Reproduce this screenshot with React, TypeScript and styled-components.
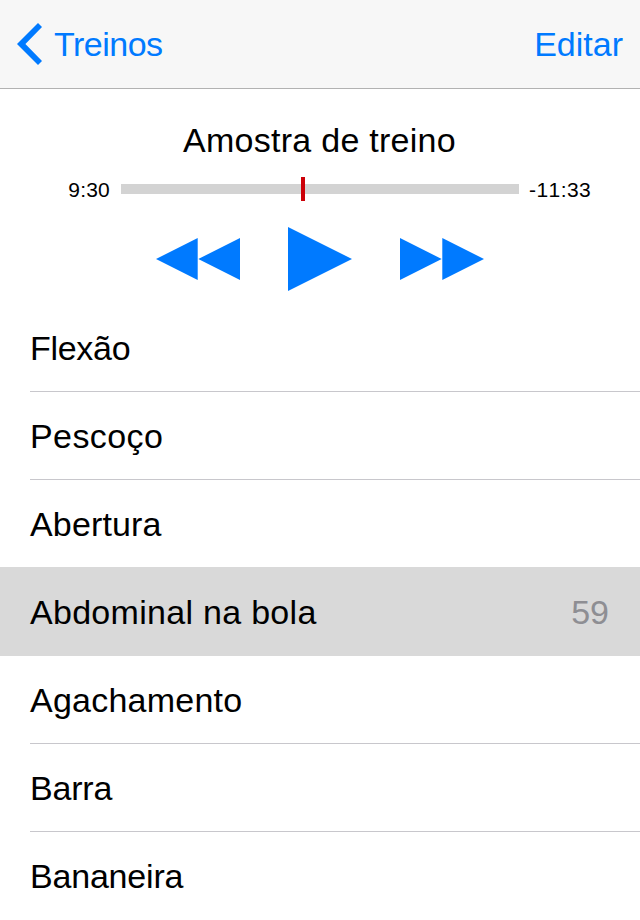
import React from 'react';
import styled, { createGlobalStyle } from 'styled-components';

const Global = createGlobalStyle`
  * { box-sizing: border-box; }
  body { margin: 0; background: #fff; }
`;

const Screen = styled.main`
  width: 640px;
  height: 920px;
  overflow: hidden;
  background: #fff;
  color: #000;
  font-family: "Liberation Sans", Arial, sans-serif;
  font-size: 34px;
  line-height: 40px;
`;

const NavBar = styled.header`
  display: flex;
  justify-content: space-between;
  height: 89px;
  padding: 24px 17px 0 17px;
  background: #f7f7f7;
  border-bottom: 1px solid #b2b2b2;
`;

const NavButton = styled.button`
  display: flex;
  gap: 12px;
  height: 40px;
  padding: 0;
  border: 0;
  background: none;
  color: #007aff;
  font: inherit;
`;

const BackIcon = styled.svg`
  margin-top: -1px;
`;

const Label = styled.span<{ $tracking?: number }>`
  display: block;
  white-space: nowrap;
  letter-spacing: ${({ $tracking = 0 }) => $tracking}px;
`;

const Player = styled.section`
  height: 215px;
  padding-top: 31px;
`;

const Title = styled.h1`
  height: 40px;
  margin: 0 1px 0 0;
  font-size: 34px;
  font-weight: 400;
  letter-spacing: 0.27px;
  text-align: center;
`;

const Timeline = styled.div`
  display: grid;
  grid-template-columns: 110px 398px 1fr;
  align-items: center;
  column-gap: 11px;
  height: 24px;
  margin-top: 17px;
`;

const Time = styled.span<{ $elapsed?: boolean }>`
  padding-top: 2px;
  margin-left: ${({ $elapsed }) => ($elapsed ? 0 : '-1px')};
  font-size: 21px;
  line-height: 22px;
  font-kerning: none;
  letter-spacing: ${({ $elapsed }) => ($elapsed ? 0.2 : 0.45)}px;
  text-align: ${({ $elapsed }) => ($elapsed ? 'right' : 'left')};
`;

const Track = styled.div`
  display: flex;
  height: 24px;
  padding-left: 180px;
  background: linear-gradient(#d3d3d3, #d3d3d3) center / 100% 10px no-repeat;
`;

const Playhead = styled.div`
  width: 4px;
  height: 24px;
  background: #cc0008;
`;

const Controls = styled.div`
  display: flex;
  justify-content: center;
  align-items: center;
  gap: 48px;
  height: 64px;
  margin-top: 26px;
`;

const ControlButton = styled.button`
  display: flex;
  padding: 0;
  border: 0;
  background: none;
  color: #007aff;
`;

const List = styled.ul`
  margin: 0;
  padding: 0;
  list-style: none;
`;

const Row = styled.li<{ $selected?: boolean }>`
  height: ${({ $selected }) => ($selected ? 89 : 88)}px;
  margin-top: ${({ $selected }) => ($selected ? '-1px' : 0)};
  padding: ${({ $selected }) => ($selected ? '1px 0 0 30px' : '0 0 0 30px')};
  background: ${({ $selected }) => ($selected ? '#d9d9d9' : 'transparent')};
`;

const RowContent = styled.div<{ $divided?: boolean }>`
  display: flex;
  justify-content: space-between;
  height: 88px;
  padding: 24px 31px 0 0;
  border-bottom: 1px solid ${({ $divided }) => ($divided ? '#c8c7cc' : 'transparent')};
`;

const Count = styled.span`
  color: #8e8e93;
`;

interface Exercise {
  name: string;
  tracking: number;
  divided?: boolean;
  selected?: boolean;
  count?: number;
}

const exercises: Exercise[] = [
  { name: 'Flexão', tracking: -0.3, divided: true },
  { name: 'Pescoço', tracking: 0.4, divided: true },
  { name: 'Abertura', tracking: 0.15 },
  { name: 'Abdominal na bola', tracking: 0.29, selected: true, count: 59 },
  { name: 'Agachamento', tracking: 0.23, divided: true },
  { name: 'Barra', tracking: -0.2, divided: true },
  { name: 'Bananeira', tracking: -0.2 },
];

export default function App() {
  return (
    <Screen>
      <Global />
      <NavBar>
        <NavButton>
          <BackIcon width="25" height="42" viewBox="0 0 25 42" fill="currentColor" aria-hidden="true">
            <path d="M21 0 25 4 8.4 21 25 38 21 42 0 21Z" />
          </BackIcon>
          <Label $tracking={-0.5}>Treinos</Label>
        </NavButton>
        <NavButton><Label>Editar</Label></NavButton>
      </NavBar>
      <Player>
        <Title>Amostra de treino</Title>
        <Timeline>
          <Time $elapsed>9:30</Time>
          <Track><Playhead /></Track>
          <Time>-11:33</Time>
        </Timeline>
        <Controls>
          <ControlButton aria-label="Retroceder">
            <svg width="84" height="42" viewBox="0 0 84 42" fill="currentColor"><path d="M41.7 0v42L0 21ZM84 0v42L42.3 21Z" /></svg>
          </ControlButton>
          <ControlButton aria-label="Reproduzir">
            <svg width="64" height="64" viewBox="0 0 64 64" fill="currentColor"><path d="M0 0 64 32 0 64Z" /></svg>
          </ControlButton>
          <ControlButton aria-label="Avançar">
            <svg width="84" height="42" viewBox="0 0 84 42" fill="currentColor"><path d="M0 0 41.7 21 0 42ZM42.3 0 84 21 42.3 42Z" /></svg>
          </ControlButton>
        </Controls>
      </Player>
      <List>
        {exercises.map(({ name, tracking, divided, selected, count }) => (
          <Row key={name} $selected={selected}>
            <RowContent $divided={divided}>
              <Label $tracking={tracking}>{name}</Label>
              {count !== undefined && <Count>{count}</Count>}
            </RowContent>
          </Row>
        ))}
      </List>
    </Screen>
  );
}
